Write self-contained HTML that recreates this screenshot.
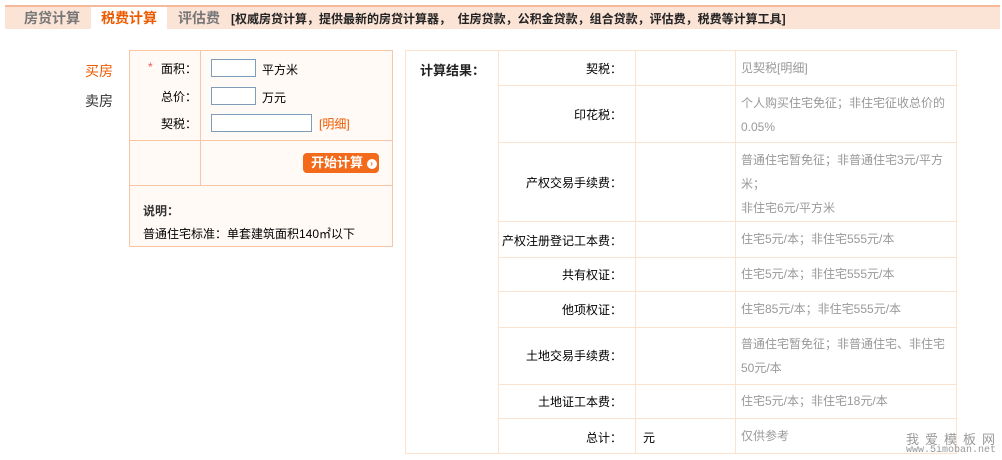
<!DOCTYPE html>
<html><head><meta charset="utf-8"><style>
body{margin:0;width:1002px;height:460px;background:#fff;font-family:"Liberation Sans","Noto Sans CJK SC",sans-serif;font-size:12px;color:#000;position:relative;overflow:hidden}
.a{position:absolute;white-space:nowrap}
.bar{position:absolute;left:5px;top:5px;width:995px;height:24px;background:#fbe3d6;border-top:2px solid #f6b99a;box-sizing:border-box}
.tab{position:absolute;top:8px;font-size:14px;font-weight:bold;color:#777}
.inp{position:absolute;height:18px;border:1px solid #7f9db9;background:#fff;box-sizing:border-box}
.l{position:absolute;background:#f8c6a5}
.t{position:absolute;background:#fbe3d0}
.g{color:#999;line-height:24px;position:absolute;left:741px;width:210px;white-space:normal}
.r{position:absolute;right:380px;text-align:right}
</style></head><body>
<div class="bar"></div>
<div class="a" style="left:91px;top:7px;width:76px;height:22px;background:#fff"></div>
<div class="a tab" style="left:24px">房贷计算</div>
<div class="a tab" style="left:101px;color:#ee5a00">税费计算</div>
<div class="a tab" style="left:178px">评估费</div>
<div class="a" style="left:231px;top:10px;font-weight:bold;color:#222">[权威房贷计算，提供最新的房贷计算器，&nbsp; 住房贷款，公积金贷款，组合贷款，评估费，税费等计算工具]</div>

<div class="a" style="left:85px;top:61px;font-size:14px;color:#ee5a00">买房</div>
<div class="a" style="left:85px;top:91px;font-size:14px;color:#333">卖房</div>

<div class="a" style="left:129px;top:50px;width:264px;height:197px;background:#fffaf6;border:1px solid #f8c6a5;box-sizing:border-box"></div>
<div class="l" style="left:200px;top:50px;width:1px;height:136px"></div>
<div class="l" style="left:129px;top:140px;width:264px;height:1px"></div>
<div class="l" style="left:129px;top:185px;width:264px;height:1px"></div>
<div class="a" style="left:148px;top:60px;color:#e55">*</div>
<div class="a" style="left:161px;top:60px">面积：</div>
<div class="a" style="left:161px;top:88px">总价：</div>
<div class="a" style="left:161px;top:115px">契税：</div>
<div class="inp" style="left:211px;top:59px;width:45px"></div>
<div class="inp" style="left:211px;top:87px;width:45px"></div>
<div class="inp" style="left:211px;top:114px;width:101px"></div>
<div class="a" style="left:262px;top:61px">平方米</div>
<div class="a" style="left:262px;top:89px">万元</div>
<div class="a" style="left:319px;top:115px;color:#ee5a00">[明细]</div>
<div class="a" style="left:303px;top:153px;width:76px;height:20px;background:#f36a1a;border-radius:4px;color:#fff;font-weight:bold;font-size:13px;line-height:20px;padding-left:8px;box-sizing:border-box">开始计算 <span style="display:inline-block;width:10px;height:10px;border-radius:50%;background:#fff;color:#f36a1a;font-size:8px;line-height:10px;text-align:center;vertical-align:1px">›</span></div>
<div class="a" style="left:143px;top:202px;font-weight:bold;color:#333">说明：</div>
<div class="a" style="left:143px;top:225px">普通住宅标准：单套建筑面积140㎡以下</div>

<div class="a" style="left:405px;top:50px;width:552px;height:404px;border:1px solid #fbe3d0;box-sizing:border-box"></div>
<div class="t" style="left:498px;top:50px;width:1px;height:404px"></div>
<div class="t" style="left:635px;top:50px;width:1px;height:404px"></div>
<div class="t" style="left:735px;top:50px;width:1px;height:404px"></div>
<div class="t" style="left:498px;top:85px;width:458px;height:1px"></div>
<div class="t" style="left:498px;top:142px;width:458px;height:1px"></div>
<div class="t" style="left:498px;top:221px;width:458px;height:1px"></div>
<div class="t" style="left:498px;top:257px;width:458px;height:1px"></div>
<div class="t" style="left:498px;top:291px;width:458px;height:1px"></div>
<div class="t" style="left:498px;top:327px;width:458px;height:1px"></div>
<div class="t" style="left:498px;top:384px;width:458px;height:1px"></div>
<div class="t" style="left:498px;top:418px;width:458px;height:1px"></div>
<div class="a" style="left:420px;top:60px;font-weight:bold;font-size:13px;color:#222">计算结果：</div>

<div class="a r" style="top:60px">契税：</div>
<div class="a r" style="top:106px">印花税：</div>
<div class="a r" style="top:174px">产权交易手续费：</div>
<div class="a r" style="top:232px">产权注册登记工本费：</div>
<div class="a r" style="top:266px">共有权证：</div>
<div class="a r" style="top:301px">他项权证：</div>
<div class="a r" style="top:347px">土地交易手续费：</div>
<div class="a r" style="top:393px">土地证工本费：</div>
<div class="a r" style="top:429px">总计：</div>
<div class="a" style="left:643px;top:429px">元</div>

<div class="g" style="top:56px">见契税[明细]</div>
<div class="g" style="top:91px">个人购买住宅免征；非住宅征收总价的0.05%</div>
<div class="g" style="top:148px">普通住宅暂免征；非普通住宅3元/平方米；<br>非住宅6元/平方米</div>
<div class="g" style="top:227px">住宅5元/本；非住宅555元/本</div>
<div class="g" style="top:262px">住宅5元/本；非住宅555元/本</div>
<div class="g" style="top:297px">住宅85元/本；非住宅555元/本</div>
<div class="g" style="top:332px">普通住宅暂免征；非普通住宅、非住宅50元/本</div>
<div class="g" style="top:389px">住宅5元/本；非住宅18元/本</div>
<div class="g" style="top:424px">仅供参考</div>

<div class="a" style="left:906px;top:429px;color:#999;font-size:13px;letter-spacing:6px">我爱模板网</div>
<div class="a" style="left:906px;top:445px;color:#999;font-size:10px;font-family:'Liberation Mono',monospace">www.5imoban.net</div>
</body></html>
